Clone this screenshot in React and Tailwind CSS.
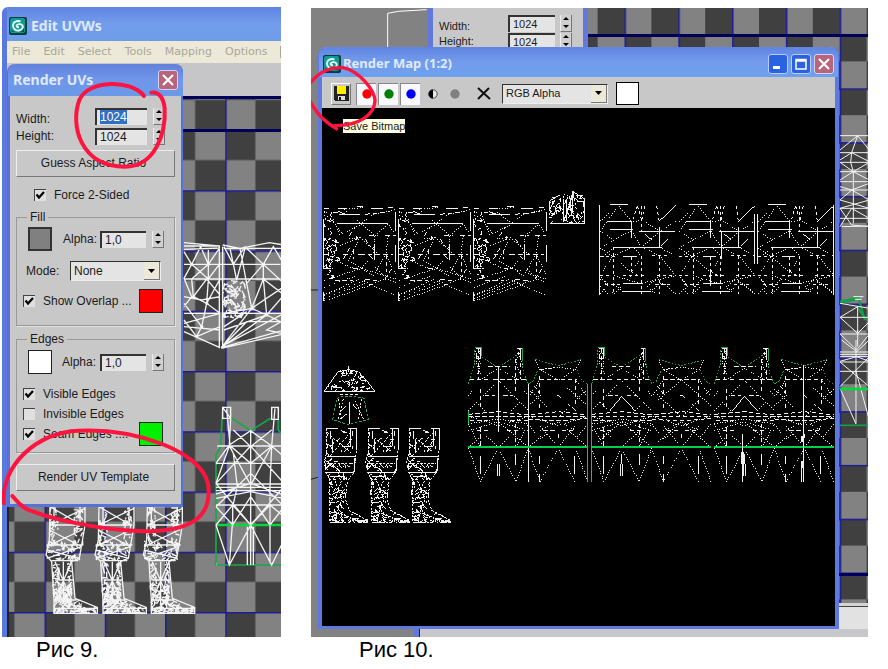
import { useEffect, useRef } from "react";

// small seeded generator so the dense mesh areas always look the same
function seeded(seed) {
  let s = seed;
  return () => {
    s = (s * 16807) % 2147483647;
    return s / 2147483647;
  };
}

// short strokes scattered through a list of [x, y, w, h, count] boxes
function scatter(seed, boxes, len = 14) {
  const rnd = seeded(seed);
  let d = "";
  for (const [x, y, w, h, n] of boxes) {
    for (let i = 0; i < n; i++) {
      const px = x + rnd() * w;
      const py = y + rnd() * h;
      const a = rnd() * Math.PI;
      const l = 3 + rnd() * len;
      const ex = Math.min(x + w, Math.max(x, px + Math.cos(a) * l));
      const ey = Math.min(y + h, Math.max(y, py + Math.sin(a) * l));
      d += `M${px.toFixed(0)} ${py.toFixed(0)}L${ex.toFixed(0)} ${ey.toFixed(0)}`;
    }
  }
  return d;
}

const LEG_BOXES = [
  [50, 268, 16, 85, 14],
  [70, 272, 60, 70, 12],
  [44, 355, 28, 45, 18],
  [70, 365, 62, 36, 12],
  [54, 400, 58, 22, 16],
  [56, 425, 14, 60, 14],
  [92, 425, 16, 60, 12],
  [66, 430, 30, 50, 8],
  [60, 480, 44, 40, 28],
  [60, 518, 40, 32, 30],
  [96, 524, 34, 26, 18],
  [126, 534, 30, 17, 16],
  [150, 541, 24, 10, 12],
];
const LEG_NOISE = scatter(77, LEG_BOXES);
const SKIRT_NOISE = scatter(19, [[42, 95, 22, 80, 18], [42, 175, 46, 70, 42], [42, 240, 30, 60, 24]], 9);
const HOOD_NOISE = scatter(5, [[718, 52, 44, 80, 34], [762, 44, 60, 88, 56]]);
const HELMET_NOISE = scatter(31, [[92, 90, 48, 22, 20], [68, 110, 100, 24, 30], [54, 134, 128, 22, 36]], 10);

/* Drawings are plotted at three times their size and scaled down */
function Plot({ x = 0, y = 0, children }) {
  return (
    <g transform={`translate(${x} ${y}) scale(0.33333)`} fill="none" strokeWidth="3">
      {children}
    </g>
  );
}

function Checker({ id, x, y, size, heavyY, className, children }) {
  const half = size / 2;
  return (
    <svg className={className} aria-hidden="true">
      <defs>
        <pattern id={id} x={x} y={y} width={size} height={size} patternUnits="userSpaceOnUse">
          <rect width={size} height={size} fill="#828282" />
          <rect width={half} height={half} fill="#404040" />
          <rect x={half} y={half} width={half} height={half} fill="#404040" />
          <path d={`M0 0.5H${size}M0.5 0V${size}`} stroke="#1c1c96" strokeWidth="2" />
        </pattern>
      </defs>
      <rect width="100%" height="100%" fill={`url(#${id})`} />
      {heavyY.map((h) => (
        <rect key={h} y={h} width="100%" height="3" fill="#00005a" />
      ))}
      {children}
    </svg>
  );
}

function MaxLogo() {
  return (
    <svg className="size-[18px] shrink-0" viewBox="0 0 18 18" aria-hidden="true">
      <rect width="18" height="18" rx="2" fill="#053c40" />
      <rect x="1" y="1" width="15" height="15" rx="2" fill="#109a92" />
      <path d="M2 12C5 17 13 16 15 11V15H3Z" fill="#055055" />
      <path
        d="M11.500 4.500C8 3.200 4 5 4 8.500C4 12 7 14 10 13.500C13 13 14.500 10.500 13.500 8.500C12.500 6.800 9.500 6.800 8 8C7 9 8 10.500 10 10.200"
        fill="none"
        stroke="#e2fffa"
        strokeWidth="1.900"
      />
    </svg>
  );
}

function Spinner({ label }) {
  const btn = "flex h-2 w-[11px] items-center justify-center border-r border-[#777] bg-[#cfcfcf]";
  return (
    <span className="flex flex-col border-b border-l border-b-[#777] border-l-[#eee]">
      <button className={btn} aria-label={`${label} up`}>
        <svg className="h-[3px] w-[6px]" viewBox="0 0 6 3"><path d="M0 3L3 0L6 3Z" /></svg>
      </button>
      <button className={btn} aria-label={`${label} down`}>
        <svg className="h-[3px] w-[6px]" viewBox="0 0 6 3"><path d="M0 0L3 3L6 0Z" /></svg>
      </button>
    </span>
  );
}

function NumberBox({ id, label, value, inputRef, className }) {
  return (
    <>
      <input
        id={id}
        ref={inputRef}
        defaultValue={value}
        className={`h-[17px] border-t-2 border-l-2 border-[#333] bg-[#e4e4e4] pl-[3px] outline-none selection:bg-[#2f6fc4] selection:text-white ${className}`}
      />
      <Spinner label={label} />
    </>
  );
}

function Tick({ label, checked }) {
  return (
    <label className="flex h-5 items-center gap-2">
      <span className="relative size-3">
        <input
          type="checkbox"
          defaultChecked={checked}
          className="peer block size-3 appearance-none border-t border-l border-[#444] bg-[#e0e0e0]"
        />
        <svg className="absolute top-0 left-0 hidden size-3 peer-checked:block" viewBox="0 0 12 12">
          <path d="M2.500 5.500L5 8.500L10 3" fill="none" stroke="#000" strokeWidth="2.200" />
        </svg>
      </span>
      {label}
    </label>
  );
}

function PushButton({ children }) {
  return (
    <button className="h-[27px] w-full border border-t-[#eee] border-r-[#777] border-b-[#777] border-l-[#eee] bg-[#c8c8c8] pr-1 pb-[2px]">
      {children}
    </button>
  );
}

function DropDown({ label, id, option, className }) {
  return (
    <span className={`relative block h-5 ${className}`}>
      <select
        id={id}
        aria-label={label}
        className="block h-full w-full appearance-none border border-t-[#333] border-r-[#eee] border-b-[#eee] border-l-[#333] bg-[#e4e4e4] pl-[3px] outline-none"
      >
        <option>{option}</option>
      </select>
      <span className="pointer-events-none absolute inset-y-[1px] right-[1px] flex w-4 items-center justify-center border-r border-b border-[#777] bg-[#ece9d8]">
        <svg className="h-1 w-[7px]" viewBox="0 0 7 4"><path d="M0 0L3.500 4L7 0Z" /></svg>
      </span>
    </span>
  );
}

function CloseButton() {
  return (
    <button className="flex size-5 items-center justify-center rounded-[3px] border border-[#d5d0ee] bg-[#b9637c]" aria-label="Close">
      <svg className="size-3" viewBox="0 0 12 12"><path d="M1 1L11 11M11 1L1 11" stroke="#fff" strokeWidth="2.200" /></svg>
    </button>
  );
}

const TITLE = "font-['Noto_Sans','DejaVu_Sans',sans-serif] font-bold text-[#dfeaff]";

function RenderUVsDialog() {
  const widthRef = useRef(null);

  useEffect(() => {
    widthRef.current.focus();
    widthRef.current.select();
  }, []);

  return (
    <section className="absolute top-[57px] left-[5px] w-44 rounded-t-lg border-r-2 border-b-[3px] border-l-[3px] border-[#5872d8] bg-[#c8c8c8] text-xs">
      <header className="-mx-[2px] flex h-8 items-center justify-between rounded-t-lg bg-linear-to-b from-[#6282dc] via-[#7096ea] to-[#6a9ae8] pr-[5px] pl-[5px]">
        <h2 className={`text-sm ${TITLE}`}>Render UVs</h2>
        <CloseButton />
      </header>
      <div className="px-[6px] pt-[10px] pb-[13px]">
        <div className="flex h-5 items-center">
          <label htmlFor="uv-width" className="w-[79px] pt-[6px]">Width:</label>
          <NumberBox id="uv-width" label="Width" value="1024" inputRef={widthRef} className="mr-[6px] w-[52px]" />
        </div>
        <div className="mb-1 flex h-5 items-center">
          <label htmlFor="uv-height" className="w-[79px]">Height:</label>
          <NumberBox id="uv-height" label="Height" value="1024" className="mr-[6px] w-[52px]" />
        </div>
        <PushButton>Guess Aspect Ratio</PushButton>
        <div className="mt-2 pl-[18px]">
          <Tick label="Force 2-Sided" checked />
        </div>

        <fieldset className="mt-[6px] border border-[#999] px-[6px] pb-3 shadow-[1px_1px_0_#e2e2e2]">
          <legend className="ml-1 px-[3px] leading-3">Fill</legend>
          <div className="flex items-center pt-1 pl-[5px]">
            <button className="size-6 border-2 border-[#333] bg-[#808080]" aria-label="Fill colour" />
            <label htmlFor="fill-alpha" className="w-[48px] pl-[11px]">Alpha:</label>
            <NumberBox id="fill-alpha" label="Fill alpha" value="1,0" className="mr-[6px] w-[46px]" />
          </div>
          <div className="mt-[10px] flex items-center pl-[3px]">
            <label htmlFor="fill-mode" className="w-11">Mode:</label>
            <DropDown id="fill-mode" label="Mode" option="None" className="w-[91px]" />
          </div>
          <div className="mt-2 flex h-6 items-center justify-between pr-[5px]">
            <Tick label="Show Overlap ..." checked />
            <button className="size-6 shrink-0 border border-[#222] bg-[#ff0000]" aria-label="Overlap colour" />
          </div>
        </fieldset>

        <fieldset className="mt-[7px] border border-[#999] px-[6px] pb-2 shadow-[1px_1px_0_#e2e2e2]">
          <legend className="ml-1 px-[3px] leading-3">Edges</legend>
          <div className="mb-[10px] flex items-center pt-[5px] pl-[5px]">
            <button className="size-6 border border-[#222] bg-white" aria-label="Edge colour" />
            <label htmlFor="edge-alpha" className="w-[48px] pl-[10px]">Alpha:</label>
            <NumberBox id="edge-alpha" label="Edge alpha" value="1,0" className="mr-[6px] w-[46px]" />
          </div>
          <Tick label="Visible Edges" checked />
          <Tick label="Invisible Edges" />
          <div className="flex h-5 items-center justify-between pr-[5px]">
            <Tick label="Seam Edges ...." checked />
            <button className="size-6 shrink-0 border border-[#222] bg-[#00f000]" aria-label="Seam colour" />
          </div>
        </fieldset>

        <div className="mt-[11px]">
          <PushButton>Render UV Template</PushButton>
        </div>
      </div>
    </section>
  );
}

/* Unwrapped mesh seen behind the Render UVs dialog */
function EditorMesh() {
  return (
    <g stroke="#f4f4f4">
      <Plot x={-9} y={84}>
        <path d="M552 188L655 198M552 198H660M552 208L660 204M552 253H842M552 215L575 253L552 295L575 350L552 380M575 253L602 200L625 253L658 205M575 253L625 297L658 253M552 297H842M575 297L625 253M575 297L580 350L620 297L660 345M552 350L605 360L660 350M580 350L620 370L660 297M552 400H660M552 370L605 440L620 370L660 400M552 430L660 400M605 440L590 470L552 420M552 455L660 503M590 470L660 440M552 440L660 450M625 205V300L620 370M668 200V500M658 200V505M668 195L720 205L808 188L852 195M672 205H852M672 200L700 253L735 200L790 253L820 200L852 253M720 205L740 310L790 253L852 310M790 253V297L755 385L740 310M790 297L852 345L800 405L755 385L852 320M790 297L800 405M690 205L710 300L735 205M672 400L755 385M672 400H852M664 503L755 385M664 503L800 405L852 430M664 500L852 400M664 503L852 450M664 503L740 425H852M672 440L740 395M672 450L800 405M664 505L852 462L800 450L852 420" strokeWidth="4" />
        <path d={scatter(12, [[670, 298, 66, 115, 85]], 22)} strokeWidth="4" />
        <path d="M575 253h1M625 253h1M790 253h1M790 297h1M580 350h1M620 370h1M755 385h1M800 405h1M605 440h1" strokeWidth="9" strokeLinecap="round" />
      </Plot>

      {/* torso */}
      <Plot x={-9} y={244}>
        <g stroke="#17a84a" strokeWidth="5">
          <path d="M668 202L662 320L648 345V675H852M692 232L752 272L812 235M835 200V270L852 290" />
          <path d="M648 555H852" stroke="#00d838" strokeWidth="8" />
        </g>
        <path d="M668 202H692V235H668ZM668 202L692 235L688 315L700 340L712 440L698 500L698 540L688 675M680 205L690 315M688 315L752 272L815 318M652 318H852M752 272V675M700 270L752 320L815 270M648 370H852M648 370L688 315L752 370L815 318L852 350M648 430L752 318L852 430M688 318L648 430M688 318L752 435L815 318M648 500L752 400L852 500M648 432H852M648 442H852M648 452H852M648 462L752 430L852 465M648 475L752 455L852 475M648 495H852M648 555L698 495L752 555L810 495L852 530M648 430L752 555L852 440M648 500L698 555L752 470L810 555L852 500M648 555L688 675L752 555L815 675L852 600M742 560V675M760 560V675M810 440V670M698 495V560M815 202H835V238H815ZM825 205L815 318L810 440" strokeWidth="4" />
        <path d="M670 204h1M690 204h1M670 234h1M690 234h1M817 204h1M833 204h1M688 315h1M752 272h1M815 318h1M652 322h1M650 370h1M752 320h1M650 432h1M650 460h1M698 495h1M650 555h1M752 555h1M688 673h1M815 673h1M650 673h1" strokeWidth="8" />
      </Plot>

      {/* legs */}
      {[0, 147, 292].map((dx) => (
        <Plot key={dx} x={-9 + dx / 3} y={394}>
          <g strokeWidth="4">
            <path d="M150 50H255V105L245 165L238 205L215 215L225 325L292 352V370H162V330L155 215L138 195L148 150ZM150 50L245 105M255 55L150 105M148 105H250M148 120L245 170M245 120L140 170M140 165H250M140 180L240 205M245 170L140 205M155 212H235M165 215L215 330M215 215L165 330M165 270H218M190 215V340M165 330H230M162 50V105M240 50V105M160 355H290M165 310L240 360M215 325L170 368" />
            <path d={scatter(40 + dx, [[150, 52, 24, 112, 34], [222, 52, 26, 112, 34], [142, 150, 98, 60, 56], [158, 212, 20, 110, 34], [202, 212, 14, 110, 30], [160, 280, 56, 60, 50], [162, 330, 84, 38, 60], [235, 350, 52, 20, 32]], 18)} />
          </g>
        </Plot>
      ))}
    </g>
  );
}

const MENU = ["File", "Edit", "Select", "Tools", "Mapping", "Options"];

function EditUVWs() {
  return (
    <div className="relative flex flex-col overflow-hidden rounded-tl-md border-l-[5px] border-[#5b78dc] bg-[#c8c8c8]">
      <header className="-ml-[5px] flex h-[34px] items-center gap-1 bg-linear-to-b from-[#5f84e2] via-[#739cec] to-[#6d9de8] pt-1 pl-[7px]">
        <MaxLogo />
        <h1 className={`text-sm ${TITLE}`}>Edit UVWs</h1>
      </header>
      <nav className="flex h-[22px] items-center gap-[13px] overflow-hidden bg-[#ece9d8] pl-[5px] font-['DejaVu_Sans',sans-serif] text-[11px] text-[#aaa799]">
        {MENU.map((item) => (
          <button key={item} className="shrink-0">{item}</button>
        ))}
        <span className="h-3 w-[2px] shrink-0 bg-[#aaa799]" />
      </nav>
      <div className="h-[33px] bg-[#c6c6c8]" />
      <Checker id="uvw-grid" x={35.5} y={34} size={60.25} heavyY={[0, 33]} className="h-[541px] w-full border-l-2 border-[#222]">
        <EditorMesh />
      </Checker>
    </div>
  );
}

function SkirtTile() {
  return (
    <>
      <path d="M40 120V270M40 340V366M80 135H235M86 108H150M85 88H112M140 82H160M183 88H218M235 86H250M258 100V155M258 198V250M193 198V242M85 96L105 108" />
      <path d="M42 90H60M70 100H90L110 106M165 106L240 98M42 226H70M100 226H125M130 212V240M150 226H250M42 268H70M130 268H155M225 170H258M140 170V190M178 170H205M230 225V280M75 306H130M165 300L210 306M145 226H160M100 240L120 205M225 300L250 262M118 170L135 145M165 180L180 200M178 230L195 245" strokeDasharray="14 9" />
      <path d="M55 110L110 180L150 175L115 245L155 268L190 225L195 170L155 135L95 165M150 135L190 106L255 92M155 135L100 90L160 86M62 105L90 170M195 170L235 135L255 165M235 170L228 225L190 290L155 268M228 225L258 290M42 305L155 268L258 300M42 348L150 300M42 350L165 305M42 358L175 310M42 366L190 316M155 305L258 350M42 325L140 290M150 175L205 225M75 245L130 268M90 200L150 175M190 260L230 300M180 316L230 300L258 310" strokeDasharray="3 5" />
      <path d={SKIRT_NOISE} />
    </>
  );
}

function PanelTile() {
  return (
    <>
      <path d="M60 78H113M50 127H125M60 153H130M148 157H255M68 205H215M100 232H140M100 338H180M100 314H160M124 125V178M209 145V205M257 80L207 127M215 200L235 180M165 165L185 183" />
      <path d="M142 80L130 120M142 80L155 125M165 80L155 125M200 80L207 125M72 205V345M124 235V280M155 80V155M155 230V345M209 230V345M30 232H85M185 230H240M30 290H60M100 290H170M200 290H257M45 316H95M195 316H240M145 290L120 275" strokeDasharray="9 9" />
      <path d="M30 157L85 80L125 127L160 125L209 157M30 127L60 100M30 157L72 183L124 155M72 183L30 207L68 232L30 290L72 345M68 232L124 205M124 155L155 205L209 157M155 205L209 230L257 290M209 230L155 290M68 232L124 280L155 232L130 205M257 127L209 157M72 290L150 314L257 290M30 320L55 345M72 316L100 338M180 338L215 310L250 340M30 345L60 316L30 300M257 345L225 316M72 205L40 232M209 205L257 232M100 300L72 325M209 290L170 325L200 345M72 345L124 290" strokeDasharray="3 5" />
    </>
  );
}

function TorsoTile({ solid }) {
  return (
    <>
      {/* front half */}
      <g stroke="#22a455">
        <path d="M495 25H515V52M625 28H637V62" />
        <path d="M475 135L493 75V28M515 55L565 85L625 45M637 62L640 100L655 135L668 128L685 92M676 62L745 80L812 62M800 92L815 125L833 135" strokeDasharray="5 5" />
      </g>
      <path d="M480 123H535M550 123H655M690 123H800M535 83H600M525 170H555M580 170H610M475 232H833M480 246H540M600 246H655M475 226L565 218L655 228L745 218L833 228M655 240L745 246L833 238M500 275H540M590 275H625M700 275H735M755 275H790M512 265V325M618 255V325M690 110V175M797 120V195M745 285V300M512 150V210M618 60V165M505 30V120M632 30V120M690 195V215M672 140L690 165M797 215L775 195" strokeDasharray="13 8" />
      <path d="M497 35L512 75L500 110L478 135M510 35L498 70L515 110M630 30L618 70L632 110L655 135M625 45L638 80M510 123L565 88L625 123M475 215L565 125L655 215M475 170L512 125M655 170L618 125M475 255L565 240L655 255M475 275L565 248L655 275M475 325L565 248L655 325M475 255L512 325M618 325L655 255M512 275L565 325L618 275M525 215L500 190M605 215L630 190M676 62L690 92L735 85M812 62L797 92L745 85L690 92L745 123L797 92M655 200L745 123L833 200M655 175L690 123M833 175L797 123M655 150L740 230M833 150L750 230M690 275L745 248L797 275M655 325L745 248L833 325M655 255L690 300L720 280M833 255L797 300M745 325L690 260M745 325L797 260M475 232L565 260L655 232L745 260L833 232M475 328L512 428L565 328L618 428L655 328L690 428L745 328L795 428M800 335L833 428" strokeDasharray="3 5" />
      <path d="M512 350V405M562 375V410M569 375V410M618 345V378M690 350V375M795 350V405M690 405V425M740 172L745 168L755 178M497 30H512V60H500V45M622 30H635M622 45H632V60" />
      {solid && <path d="M565 85V280M655 135V428" />}
      {!solid && <path d="M530 215L565 172L605 215M565 345V375" />}
      <path d="M475 325H833" stroke="#00d048" strokeWidth="6" />
    </>
  );
}

/* The rendered template: skirts, side panels, torso shells, helmet and legs */
function RenderedMap() {
  return (
    <svg className="block h-[518px] w-full bg-black" shapeRendering="crispEdges" stroke="#f0f0f0" role="img" aria-label="Rendered UV template">
      {[0, 225, 451].map((dx) => (
        <Plot key={dx} x={-12 + dx / 3} y={71}>
          <SkirtTile />
        </Plot>
      ))}
      <Plot x={-12} y={71}>
        <path d="M720 135H825V60L800 45L790 38M718 95L720 65L750 48" />
        <path d={HOOD_NOISE} />
        <path d="M760 60V130L775 90L790 35L785 110M770 70V125" strokeWidth="4" />
      </Plot>

      {[0, 238, 475].map((dx) => (
        <Plot key={dx} x={268 + dx / 3} y={71}>
          <PanelTile />
        </Plot>
      ))}
      <Plot x={268} y={71}>
        <path d="M28 78V348M730 78V348M495 105V255M504 105V255M396 157V240M363 270V320" />
      </Plot>

      {[0, 370, 738].map((dx) => (
        <Plot key={dx} x={-12 + dx / 3} y={231}>
          <TorsoTile solid={dx === 0} />
        </Plot>
      ))}
      <Plot x={-12} y={231}>
        <path d="M833 135V428M845 135V428M475 215V255" stroke="#10c850" strokeWidth="4" />
        <path d="M1480 78V428M1475 370V428M1298 285V428" />
        <path d="M1479 365V388M1479 290V310M1299 340V375" strokeWidth="9" />
      </Plot>

      {/* helmet and neck guard */}
      <Plot x={-12} y={231}>
        <path d="M42 157H195M42 157L65 125L85 98L115 92L145 98L170 125L195 157M115 82V100" />
        <path d={HELMET_NOISE} />
        <path d="M90 168H150" strokeDasharray="10 5" />
        <path d="M80 178L92 174H145L162 178L175 242L115 257L68 242Z" stroke="#2ba45a" strokeDasharray="8 5" />
        <path d="M118 188V255M95 215L110 200M140 210L128 195M90 240L110 225" />
        <path d="M85 180L95 245M155 180L145 245M100 180L85 240M135 185L160 240" strokeDasharray="6 5" />
      </Plot>

      {[0, 125, 248].map((dx) => (
        <Plot key={dx} x={-12 + dx / 3} y={231}>
          <path d="M50 268H85M115 268H140V325M122 268V322H95M50 353H135M45 402H130M134 358V395M60 375L90 395M60 412H100M62 275V300M60 550H100M68 340V300" />
          <path d="M50 268V340L42 370L50 402L60 425V550M140 325L132 400L112 425L106 480L118 515L175 545M60 350L122 280M60 290L122 340M75 425L95 480M95 425L75 480M118 515L150 530L175 550M50 375H130" strokeDasharray="7 4" />
          <path d={LEG_NOISE} />
        </Plot>
      ))}
    </svg>
  );
}

const CHANNELS = [
  { name: "Red", fill: "#ff0000" },
  { name: "Green", fill: "#008000" },
  { name: "Blue", fill: "#0000ff" },
];

function RenderMapWindow() {
  const caption = "flex size-5 items-center justify-center rounded-[3px] border border-[#b8ccff] bg-[#2a62e0]";
  return (
    <section className="absolute top-[39px] right-[29px] left-[7px] rounded-t-lg border-x-4 border-b-[3px] border-[#5f7ade] bg-[#c8c8c8] text-[11px]">
      <header className="-mx-[3px] flex h-[30px] items-center rounded-t-lg bg-linear-to-b from-[#5f84e2] via-[#739cec] to-[#6ca0ee] pt-[3px] pr-1 pl-1">
        <MaxLogo />
        <h2 className={`flex-1 pl-[2px] text-[13px] ${TITLE}`}>Render Map (1:2)</h2>
        <div className="flex gap-[3px]">
          <button className={caption} aria-label="Minimize">
            <svg className="size-3" viewBox="0 0 12 12"><path d="M1 9.500H8" stroke="#fff" strokeWidth="3" /></svg>
          </button>
          <button className={caption} aria-label="Maximize">
            <svg className="size-3" viewBox="0 0 12 12"><path d="M1 1.500H11V11H1ZM1 3H11" fill="none" stroke="#fff" strokeWidth="1.500" /></svg>
          </button>
          <CloseButton />
        </div>
      </header>
      <div className="flex h-[31px] items-center pt-[2px] pl-[9px]">
        <button className="mr-[5px] flex h-[22px] w-5 items-center justify-center border border-t-white border-r-[#777] border-b-[#777] border-l-white" aria-label="Save Bitmap">
          <svg className="size-[15px]" viewBox="0 0 15 15" shapeRendering="crispEdges">
            <path d="M0 0H15V15H1L0 14Z" fill="#222" />
            <path d="M3 0H12V8H3Z" fill="#ffee00" />
            <path d="M4 10H11V14H4Z" fill="#ddd" />
            <path d="M5 11H7V14H5Z" fill="#111" />
          </svg>
        </button>
        <div className="flex gap-[2px]">
          {CHANNELS.map((c) => (
            <button key={c.name} className="flex h-[22px] w-5 items-center justify-center border-t border-l border-[#888] bg-[#f8f8ff]" aria-label={`${c.name} channel`}>
              <svg className="size-[10px]" viewBox="0 0 10 10"><circle cx="5" cy="5" r="4.700" fill={c.fill} /></svg>
            </button>
          ))}
        </div>
        <button className="ml-[2px] flex h-[22px] w-[22px] items-center justify-center" aria-label="Alpha channel">
          <svg className="size-[10px]" viewBox="0 0 10 10">
            <circle cx="5" cy="5" r="4.500" fill="#e8e8e8" />
            <path d="M5 0.500A4.500 4.500 0 0 0 5 9.500Z" />
            <circle cx="5" cy="5" r="4.200" fill="none" stroke="#222" strokeWidth="0.800" />
          </svg>
        </button>
        <button className="flex h-[22px] w-[22px] items-center justify-center" aria-label="Monochrome">
          <svg className="size-[10px]" viewBox="0 0 10 10"><circle cx="5" cy="5" r="4.700" fill="#808080" /></svg>
        </button>
        <button className="mx-2 flex h-[22px] w-5 items-center justify-center" aria-label="Clear">
          <svg className="h-[13px] w-[14px]" viewBox="0 0 14 13"><path d="M1 1L13 12M12 1L1 12" fill="none" stroke="#111" strokeWidth="2" /></svg>
        </button>
        <DropDown id="channel-display" label="Channel display" option="RGB Alpha" className="mr-2 w-[106px]" />
        <button className="size-[23px] border border-black bg-white" aria-label="Background colour" />
      </div>
      <RenderedMap />
      <span className="absolute top-[71px] left-5 border border-black bg-[#ffffe1] leading-[14px]" role="tooltip">
        Save Bitmap
      </span>
    </section>
  );
}

function RenderMapScene() {
  return (
    <div className="relative mt-[1px] flex flex-col overflow-hidden">
      <div className="flex flex-1">
        <svg className="w-[117px] shrink-0 bg-[#828282]" aria-hidden="true">
          <Plot x={-6} y={-8}>
            <path d="M248 160V40L280 34L365 29" stroke="#fff" />
            <path d="M18 870H45M18 1438L45 1430" stroke="#222" />
          </Plot>
        </svg>
        <div className="w-[160px] shrink-0 border-x-[5px] border-[#6278dc] bg-[#c8c8c8] pt-[6px] pl-[6px] text-[11px]">
          <div className="flex h-[18px] items-center">
            <label htmlFor="map-width" className="w-[69px] pt-[6px]">Width:</label>
            <NumberBox id="map-width" label="Map width" value="1024" className="mr-[5px] w-[47px]" />
          </div>
          <div className="flex h-[18px] items-center">
            <label htmlFor="map-height" className="w-[69px]">Height:</label>
            <NumberBox id="map-height" label="Map height" value="1024" className="mr-[5px] w-[47px]" />
          </div>
        </div>
        <Checker id="map-grid" x={36.5} y={26.5} size={53.8} heavyY={[26, 565]} className="h-[595px] min-w-0 flex-1">
          <g stroke="#f4f4f4">
            <Plot x={2} y={-8}>
              <path d="M750 407H843M750 450L803 407L838 450M803 407L785 458L782 487L790 515V670M750 458H843M750 487H843M750 480L785 458L838 485M750 487L790 515L838 487M750 515H843M750 540L790 515L838 540M750 545H843M750 560L785 570L838 550M750 600L785 570L838 600M750 570H843M750 600L838 625M838 600L750 625H843M750 655H843M750 680L785 625L838 655M750 625L785 675L838 680M755 680L838 678" />
            </Plot>
            <Plot x={2} y={172}>
              <path d="M750 365L805 352L825 420M755 368L800 358M805 385L828 420" stroke="#12a044" strokeWidth="6" />
              <path d="M750 370L838 385M750 412L803 380V500M750 412H843M750 412L803 460L838 425M750 462H843M750 462L800 510L838 462M790 350H820M795 358H815" />
            </Plot>
            <Plot x={2} y={332}>
              <path d="M755 0L800 35L838 0M750 36H843M750 43H843M750 50H843M750 64L800 50L838 64M750 66H843M750 94H843M750 140L838 50M838 140L750 66M798 0V250M750 145L798 252M838 240L798 94" />
              <path d="M750 147H843" stroke="#00d838" strokeWidth="8" />
              <path d="M750 256H843" stroke="#149c44" strokeWidth="5" />
            </Plot>
          </g>
        </Checker>
      </div>
      <div className="flex h-[34px]">
        <div className="w-[103px] shrink-0 bg-[#828282]" />
        <div className="flex flex-1 flex-col border-l-[5px] border-[#6278dc]">
          <div className="h-1 border-b border-[#444] bg-[#d4d4d4]" />
          <div className="flex-1 border-l border-[#222] bg-[#e2e2e2]" />
          <div className="h-2 border-l border-[#222] bg-[#c8c8cc]" />
        </div>
      </div>
      <RenderMapWindow />
      <svg className="pointer-events-none absolute inset-0 size-full" aria-hidden="true">
        <Plot x={-6} y={-8}>
          <path
            d="M12 254C40 215 75 200 115 203C165 215 208 270 210 302C208 345 165 375 90 377M12 298C30 335 55 365 95 386"
            stroke="#ff1440"
            strokeWidth="10"
            strokeLinecap="round"
          />
        </Plot>
      </svg>
    </div>
  );
}

export default function App() {
  return (
    <main className="grid grid-cols-[279fr_557fr] gap-x-[30px] bg-white pt-[7px] pr-5 pl-[2px] font-['Liberation_Sans',Arial,sans-serif] text-[#1c1c1c]">
      <figure className="relative min-w-0">
        <EditUVWs />
        <RenderUVsDialog />
        <svg className="pointer-events-none absolute inset-0 size-full" aria-hidden="true">
          <Plot x={-2} y={-7}>
            <g stroke="#ff1440" strokeWidth="12" strokeLinecap="round">
              <path d="M432 288C395 238 265 238 238 300C210 375 240 500 375 500C465 500 498 400 494 325C490 288 472 274 454 278" />
              <path d="M12 1510C0 1400 110 1296 235 1292C400 1284 600 1350 624 1450C640 1560 560 1594 430 1594C300 1590 160 1558 100 1535C62 1525 50 1500 37 1488" />
            </g>
          </Plot>
        </svg>
        <figcaption className="pl-[34px] text-[22px] leading-[26px] text-black">Рис 9.</figcaption>
      </figure>
      <figure className="min-w-0">
        <RenderMapScene />
        <figcaption className="pl-12 text-[22px] leading-[26px] text-black">Рис 10.</figcaption>
      </figure>
    </main>
  );
}
